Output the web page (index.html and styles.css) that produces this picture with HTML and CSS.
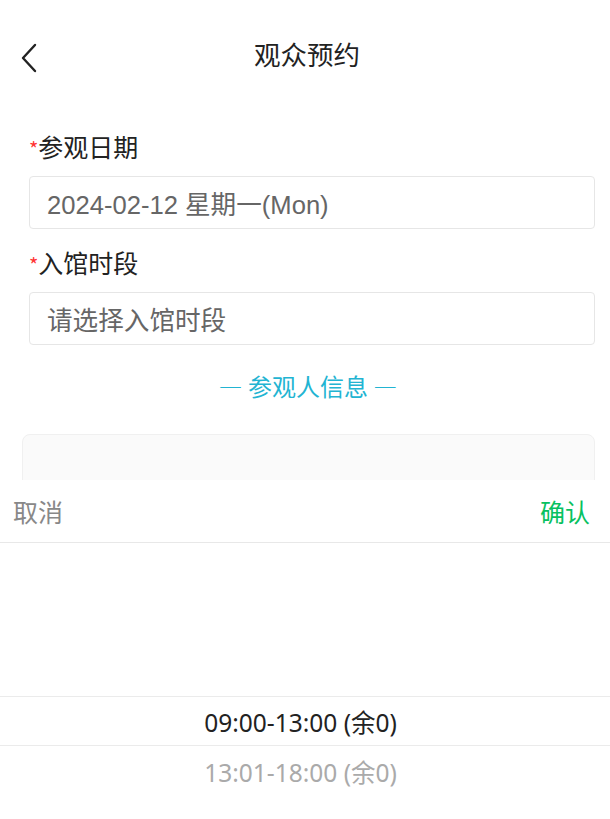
FILE: index.html
```html
<!DOCTYPE html>
<html lang="zh-CN">
<head>
<meta charset="utf-8">
<title>观众预约</title>
<link rel="stylesheet" href="styles.css">
</head>
<body>
<header class="nav">
  <span class="nav-back">
    <svg width="18" height="30" viewBox="0 0 18 30"><path d="M15 2 L3 15 L15 28" fill="none" stroke="#222" stroke-width="2.4" stroke-linecap="round" stroke-linejoin="round"/></svg>
  </span>
  <h1 class="nav-title">观众预约</h1>
</header>
<main class="form">
  <div class="label"><span class="req">*</span>参观日期</div>
  <div class="field value">2024-02-12 星期一(Mon)</div>
  <div class="label label-2"><span class="req">*</span>入馆时段</div>
  <div class="field placeholder">请选择入馆时段</div>
  <div class="divider">— 参观人信息 —</div>
  <div class="card">
    <div class="card-label">姓名</div>
  </div>
</main>
<section class="sheet">
  <div class="sheet-bar">
    <span class="sheet-cancel">取消</span>
    <span class="sheet-ok">确认</span>
  </div>
  <div class="picker">
    <div class="picker-item selected">09:00-13:00 (余0)</div>
    <div class="picker-item">13:01-18:00 (余0)</div>
  </div>
</section>
</body>
</html>
```
FILE: styles.css
```css
html, body {
  margin: 0;
  padding: 0;
  background: #fff;
  font-family: "Noto Sans CJK SC", "Noto Sans", sans-serif;
  color: #333;
  height: 819px;
  overflow: hidden;
}
.nav {
  height: 110px;
  display: flex;
  align-items: center;
  justify-content: center;
  position: relative;
}
.nav-back {
  position: absolute;
  left: 20px;
  top: 43px;
  width: 18px;
  height: 30px;
}
.nav-back svg { display: block; }
.nav-title {
  margin: 0 0 2px 4px;
  font-size: 26.5px;
  font-weight: 400;
  color: #222;
  line-height: 1;
}
.form {
  padding: 18px 15px 0 29px;
}
.label {
  font-size: 25px;
  line-height: 36px;
  color: #222;
}
.label-2 { margin-top: 15px; }
.req {
  color: #f33;
  font-size: 20px;
}
.field {
  margin-top: 9px;
  height: 51px;
  border: 1px solid #e6e6e6;
  border-radius: 4px;
  display: flex;
  align-items: center;
  padding-left: 17px;
  font-family: "Liberation Sans", "Noto Sans CJK SC", sans-serif;
  font-size: 25.6px;
  color: #666;
}
.placeholder { color: #666; }
.divider {
  margin-top: 26px;
  text-align: center;
  font-size: 24px;
  line-height: 30px;
  color: #22b4d2;
  margin-right: -15px;
  margin-left: -29px;
  padding-left: 6px;
}
.card {
  margin-top: 33px;
  margin-left: -7px;
  height: 120px;
  background: #fafafa;
  border: 1px solid #f0f0f0;
  border-radius: 8px;
  padding: 38px 24px 0;
  box-sizing: border-box;
}
.card-label {
  font-size: 22px;
  color: #333;
}
.sheet {
  position: fixed;
  left: 0;
  right: 0;
  bottom: 0;
  height: 339px;
  background: #fff;
  display: flex;
  flex-direction: column;
}
.sheet-bar {
  height: 62px;
  border-bottom: 1px solid #e8e8e8;
  display: flex;
  align-items: center;
  justify-content: space-between;
  padding: 0 20px 0 13px;
  font-size: 25px;
}
.sheet-cancel { color: #888; }
.sheet-ok { color: #07c160; }
.picker {
  flex: 1;
  padding-top: 153px;
}
.picker-item {
  height: 50px;
  display: flex;
  align-items: center;
  justify-content: center;
  padding-right: 9px;
  font-family: "Noto Sans", "Noto Sans CJK SC", sans-serif;
  font-size: 24.5px;
  color: #aaa;
  box-sizing: border-box;
}
.picker-item.selected {
  color: #222;
  border-top: 1px solid #ebebeb;
  border-bottom: 1px solid #ebebeb;
}
```
